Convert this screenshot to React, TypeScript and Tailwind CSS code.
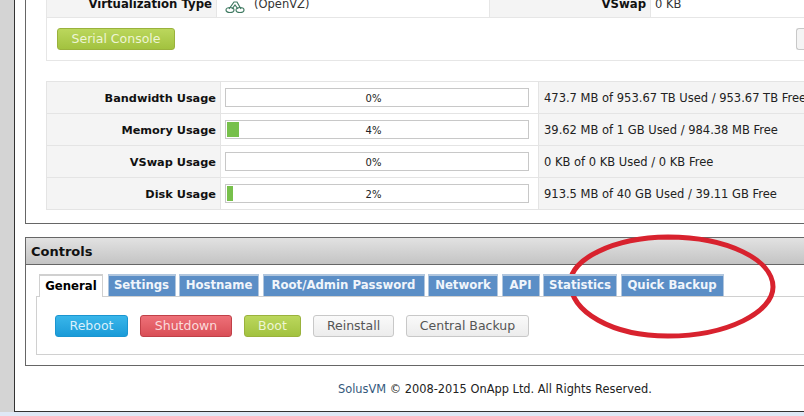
import React from "react";

const font = { fontFamily: '"DejaVu Sans", Verdana, sans-serif' };

const rows = [
  { label: "Bandwidth Usage", pct: 0, text: "473.7 MB of 953.67 TB Used / 953.67 TB Free" },
  { label: "Memory Usage", pct: 4, text: "39.62 MB of 1 GB Used / 984.38 MB Free" },
  { label: "VSwap Usage", pct: 0, text: "0 KB of 0 KB Used / 0 KB Free" },
  { label: "Disk Usage", pct: 2, text: "913.5 MB of 40 GB Used / 39.11 GB Free" },
];

const tabs = [
  { t: "Settings", w: "w-[68px]" },
  { t: "Hostname", w: "w-[80px]" },
  { t: "Root/Admin Password", w: "w-[162px]" },
  { t: "Network", w: "w-[70px]" },
  { t: "API", w: "w-[38px]" },
  { t: "Statistics", w: "w-[74px]" },
  { t: "Quick Backup", w: "w-[103px]" },
];

function Usage({ label, pct, text }: { label: string; pct: number; text: string }) {
  return (
    <div className="flex h-8 border-b border-[#e4e4e4]">
      <div className="w-[174px] shrink-0 bg-[#f4f4f4] border-r border-[#e4e4e4] flex items-center justify-end pr-[4px] pt-[3px] text-[11.3px] font-bold text-[#111]">
        {label}
      </div>
      <div className="w-[318px] shrink-0 bg-white border-r border-[#e4e4e4] flex items-center pl-[4px]">
        <div className="relative w-[304px] h-[19px] border border-[#c8c8c8] bg-white p-[1px]">
          <div className="h-full bg-[#77c04b]" style={{ width: `${pct === 4 ? 12 : pct === 2 ? 6 : 0}px` }} />
          <div className="absolute inset-0 flex items-center justify-center pr-[7px] pt-[1px] text-[10px] text-[#222]">{pct}%</div>
        </div>
      </div>
      <div className="flex-1 bg-[#f4f4f4] flex items-center pl-[5px] pt-[3px] text-[11.5px] text-[#222] whitespace-nowrap overflow-hidden">
        {text}
      </div>
    </div>
  );
}

function Btn({ children, cls }: { children: React.ReactNode; cls: string }) {
  return (
    <div className={`h-[22px] rounded-[3px] border flex items-center justify-center pt-[1px] text-[12.5px] shrink-0 ${cls}`}>
      {children}
    </div>
  );
}

export default function App() {
  return (
    <div className="relative w-[804px] h-[416px] overflow-hidden bg-[#dfe8f6] text-[11px]" style={font}>
      <div className="flex h-[412px]">
        <div className="w-[14px] shrink-0 bg-[#d4d4d4]" />
        <div className="flex-1 min-w-0 bg-white border-l border-b border-[#333] pl-[10px]">
          {/* first panel */}
          <div className="h-[224px] border-l border-b border-[#666] pl-[20px]">
            <div className="border-l border-b border-[#e6e6e6] h-[61px]">
              <div className="h-[18px] flex border-b border-[#e6e6e6] overflow-hidden">
                <div className="w-[169px] shrink-0 bg-[#f4f4f4] flex items-end justify-end pr-[4px] pb-[6px] text-[11.7px] font-bold text-[#111] leading-[13px] whitespace-nowrap">
                  Virtualization Type
                </div>
                <div className="w-[273px] shrink-0 border-l border-[#e6e6e6] flex items-end pl-[8px] pb-[6px] gap-[9px] text-[11.5px] leading-[13px] text-[#333]">
                  <svg width="20" height="14" viewBox="0 0 20 14" className="mb-[-3px]" fill="none" stroke="#3f7a62" strokeWidth="1.2">
                    <ellipse cx="5" cy="10" rx="4" ry="2.5" />
                    <ellipse cx="15" cy="10" rx="4" ry="2.5" />
                    <path d="M4 9 9 2h3l4 7M7 9l3-4 3 4" />
                  </svg>
                  <span>(OpenVZ)</span>
                </div>
                <div className="w-[161px] shrink-0 bg-[#f4f4f4] border-l border-[#e6e6e6] flex items-end justify-end pr-[4px] pb-[6px] text-[11.7px] font-bold text-[#111] leading-[13px]">
                  VSwap
                </div>
                <div className="flex-1 border-l border-[#e6e6e6] flex items-end pl-[4px] pb-[6px] text-[11.5px] leading-[13px] text-[#333]">0 KB</div>
              </div>
              <div className="flex justify-between pl-[10px] pt-[10px]">
                <Btn cls="w-[118px] border-[#9ab23c] bg-gradient-to-b from-[#bbd75c] to-[#a2c23f] text-[#eef5d5]">Serial Console</Btn>
                <div className="w-[8px] h-[22px] rounded-l-[3px] border border-r-0 border-[#c8c8c8] bg-[#f4f4f4]" />
              </div>
            </div>
            <div className="mt-[20px] border-t border-l border-[#e4e4e4] w-[758px]">
              {rows.map((r) => (
                <Usage key={r.label} {...r} />
              ))}
            </div>
          </div>
          {/* controls */}
          <div className="mt-[13px] h-[129px] border-l border-t border-b border-[#666]">
            <div className="h-[27px] bg-gradient-to-b from-[#e2e2e2] to-[#c4c4c4] border-b border-[#666] flex items-center pl-[5px] pt-[1px] text-[13px] font-bold text-[#111]">
              Controls
            </div>
            <div className="pl-[10px] pt-[8px]">
              <div className="flex items-end h-[23px] pl-[3px] gap-[3.5px] relative z-10">
                <div className="w-[64px] h-[23px] -mb-px mr-[1px] bg-white border-t-2 border-x border-[#d0d0d0] border-b-0 flex items-center justify-center text-[11.7px] font-bold text-black">
                  General
                </div>
                {tabs.map(({ t, w }) => (
                  <div
                    key={t}
                    className={`h-[22px] bg-[#5b8ec6] border-t-2 border-x border-[#b0c6de] flex items-center justify-center text-[11.7px] font-bold text-[#f0f5fb] whitespace-nowrap ${w}`}
                  >
                    {t}
                  </div>
                ))}
              </div>
              <div className="h-[59px] border-l border-t border-b border-[#d0d0d0] flex items-center gap-[12px] pl-[18px]">
                <Btn cls="w-[73px] border-[#1b95d0] bg-gradient-to-b from-[#38b6ea] to-[#1a9bd8] text-[#d8f0fb]">Reboot</Btn>
                <Btn cls="w-[92px] border-[#c04048] bg-gradient-to-b from-[#ee7078] to-[#d94f57] text-[#fbdcdc]">Shutdown</Btn>
                <Btn cls="w-[57px] border-[#9ab23c] bg-gradient-to-b from-[#bbd75c] to-[#a2c23f] text-[#eef5d5]">Boot</Btn>
                <Btn cls="w-[81px] border-[#c8c8c8] bg-gradient-to-b from-[#fafafa] to-[#ececec] text-[#555]">Reinstall</Btn>
                <Btn cls="w-[123px] border-[#c8c8c8] bg-gradient-to-b from-[#fafafa] to-[#ececec] text-[#555]">Central Backup</Btn>
              </div>
            </div>
          </div>
          <div className="mt-[15px] pl-[313px] text-[11.4px] text-[#222] whitespace-nowrap">
            <span className="text-[#34587c]">SolusVM</span> © 2008-2015 OnApp Ltd. All Rights Reserved.
          </div>
        </div>
      </div>
      <svg className="absolute left-0 top-0 pointer-events-none" width="804" height="416" viewBox="0 0 804 416" fill="none">
        <path
          d="M668 237C728 237 773 260 773 287C773 312 728 336 668 336C612 336 570.5 312 570.5 282C570.5 260 612 237.500 668 237Z"
          stroke="#d8222e"
          strokeWidth="5"
        />
      </svg>
    </div>
  );
}
